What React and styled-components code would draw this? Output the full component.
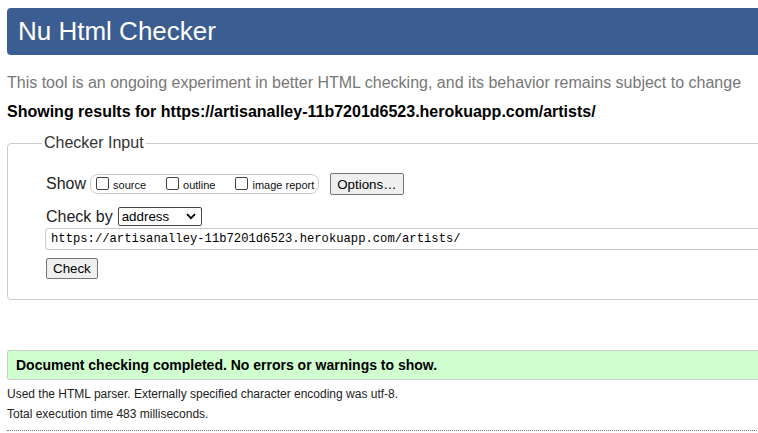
import React from "react";
import styled, { createGlobalStyle } from "styled-components";

const GlobalStyle = createGlobalStyle`
  html, body {
    margin: 0;
    padding: 0;
    background: #fff;
    overflow: hidden;
  }
  body {
    font-family: "Liberation Sans", Arial, sans-serif;
    color: #000;
  }
`;

const Page = styled.div`
  width: 900px;
  padding: 8px 0 0 7px;
`;

const Banner = styled.h1`
  margin: 0;
  height: 47px;
  display: flex;
  align-items: center;
  padding-left: 11px;
  background: #3c5d91;
  border-radius: 4px 0 0 4px;
  color: #fff;
  font-size: 26px;
  font-weight: normal;
`;

const Intro = styled.p`
  margin: 18px 0 0;
  font-size: 16px;
  line-height: 20px;
  color: #777;
`;

const ResultsFor = styled.h2`
  margin: 9px 0 0;
  font-size: 16px;
  line-height: 20px;
  font-weight: bold;
  color: #000;
`;

const Fieldset = styled.fieldset`
  margin: 12px 0 0;
  padding: 21px 38px 20px 38px;
  border: 1px solid #ccc;
  border-radius: 4px 0 0 4px;
  height: 123px;
`;

const Legend = styled.legend`
  margin-left: -4px;
  padding: 0 2px;
  font-size: 16px;
  color: #333;
`;

const Row = styled.div`
  display: flex;
  align-items: center;
  margin-top: ${(p) => p.$mt || 0}px;
`;

const RowLabel = styled.span`
  font-size: 16px;
  color: #222;
  margin-right: 4px;
`;

const Group = styled.div`
  display: flex;
  align-items: center;
  height: 18px;
  border: 1px solid #ccc;
  border-radius: 8px;
  padding: 0 4px 0 5px;
`;

const CheckItem = styled.label`
  display: flex;
  align-items: center;
  font-size: 11px;
  color: #111;
  margin-right: ${(p) => p.$gap || 0}px;
  padding-top: 2px;
`;

const Box = styled.span`
  width: 11px;
  height: 11px;
  border: 1px solid #444;
  border-radius: 2px;
  margin-right: 4px;
  margin-top: -3px;
  background: #fff;
`;

const Button = styled.button`
  font-family: "Liberation Sans", Arial, sans-serif;
  font-size: 13.33px;
  color: #000;
  background: #efefef;
  border: 1px solid #767676;
  border-radius: 2px;
  box-sizing: border-box;
  height: ${(p) => p.$h || 22}px;
  padding: 0 6px;
  margin-left: ${(p) => p.$ml || 0}px;
`;

const Select = styled.div`
  width: 84px;
  height: 19px;
  border: 1px solid #444;
  border-radius: 2px;
  display: flex;
  align-items: center;
  justify-content: space-between;
  padding: 0 5px 0 3px;
  box-sizing: border-box;
  font-size: 13.33px;
  margin-left: 1px;
`;

const UrlInput = styled.div`
  margin-top: 2px;
  margin-left: -1px;
  height: 22px;
  box-sizing: border-box;
  border: 1px solid #ccc;
  border-right: none;
  border-radius: 4px 0 0 4px;
  display: flex;
  align-items: center;
  padding-left: 5px;
  font-family: "Liberation Mono", "DejaVu Sans Mono", monospace;
  font-size: 12.2px;
  color: #000;
`;

const Success = styled.div`
  margin-top: 50px;
  height: 28px;
  display: flex;
  align-items: center;
  padding-left: 8px;
  background: #d0ffd0;
  border: 1px solid #ccc;
  border-right: none;
  border-radius: 3px 0 0 3px;
  font-size: 14px;
  font-weight: bold;
  color: #000;
`;

const Note = styled.p`
  margin: ${(p) => p.$mt || 0}px 0 0;
  font-size: 12px;
  line-height: 14px;
  color: #222;
`;

const Dotted = styled.hr`
  margin: 9px 0 0;
  border: none;
  border-top: 1px dotted #777;
`;

function Chevron() {
  return (
    <svg width="10" height="7" viewBox="0 0 10 7">
      <path d="M1 1.2 L5 5.2 L9 1.2" fill="none" stroke="#000" strokeWidth="1.8" />
    </svg>
  );
}

export default function App() {
  return (
    <>
      <GlobalStyle />
      <Page>
        <Banner>Nu Html Checker</Banner>
        <Intro>
          This tool is an ongoing experiment in better HTML checking, and its behavior remains subject to change
        </Intro>
        <ResultsFor>Showing results for https://artisanalley-11b7201d6523.herokuapp.com/artists/</ResultsFor>
        <Fieldset>
          <Legend>Checker Input</Legend>
          <Row>
            <RowLabel>Show</RowLabel>
            <Group>
              <CheckItem $gap={20}>
                <Box />
                source
              </CheckItem>
              <CheckItem $gap={20}>
                <Box />
                outline
              </CheckItem>
              <CheckItem>
                <Box />
                image report
              </CheckItem>
            </Group>
            <Button $ml={11}>Options…</Button>
          </Row>
          <Row $mt={12}>
            <RowLabel>Check by</RowLabel>
            <Select>
              address
              <Chevron />
            </Select>
          </Row>
          <UrlInput>https://artisanalley-11b7201d6523.herokuapp.com/artists/</UrlInput>
          <Row $mt={8}>
            <Button $h={21}>Check</Button>
          </Row>
        </Fieldset>
        <Success>Document checking completed. No errors or warnings to show.</Success>
        <Note $mt={7}>Used the HTML parser. Externally specified character encoding was utf-8.</Note>
        <Note $mt={6}>Total execution time 483 milliseconds.</Note>
        <Dotted />
      </Page>
    </>
  );
}
